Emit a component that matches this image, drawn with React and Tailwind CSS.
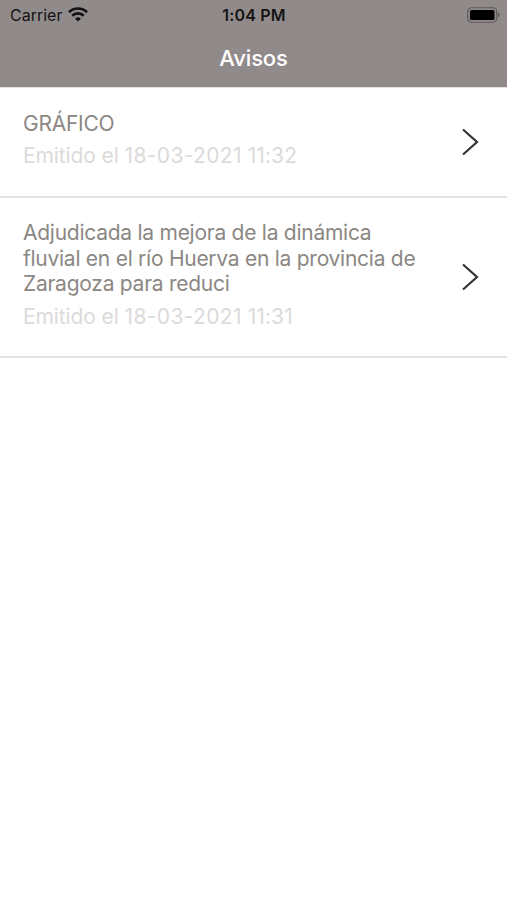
const notices = [
  {
    id: 1,
    lines: ["GRÁFICO"],
    date: "18-03-2021",
    time: "11:32",
  },
  {
    id: 2,
    lines: [
      "Adjudicada la mejora de la dinámica",
      "fluvial en el río Huerva en la provincia de",
      "Zaragoza para reduci",
    ],
    date: "18-03-2021",
    time: "11:31",
  },
];

function WifiIcon() {
  return (
    <svg width="20" height="15" viewBox="0 0 20 15" fill="none" stroke="#111" strokeWidth="2.7">
      <path d="M1 5.2a12.8 12.8 0 0 1 18 0" />
      <path d="M4.2 8.7a8.2 8.2 0 0 1 11.6 0" />
      <path d="M10 14.4 7.1 11.7a4.2 4.2 0 0 1 5.8 0Z" fill="#111" stroke="none" />
    </svg>
  );
}

function BatteryIcon() {
  return (
    <svg width="33" height="16" viewBox="0 0 33 16" fill="none">
      <rect x="0.75" y="0.75" width="29" height="14.5" rx="4" stroke="#5e5858" strokeWidth="1.2" />
      <rect x="3" y="3" width="24.5" height="10" rx="1.5" fill="#000" />
      <path d="M31 5.5c2 1 2 4 0 5Z" fill="#5e5858" />
    </svg>
  );
}

function NoticeRow({ notice }) {
  return (
    <li className="flex items-center justify-between border-b-2 border-[#e3e3e3] pr-7 pl-[23px]">
      <div className="pt-[22.5px] pb-[26.5px]">
        <h2 className="text-[21px] leading-[25.5px] tracking-[-0.26px] text-[#8b8784]">
          {notice.lines.map((line) => (
            <span key={line} className="block whitespace-nowrap">
              {line}
            </span>
          ))}
        </h2>
        <p className="mt-[7px] text-[21px] leading-[26px] tracking-[-0.1px] whitespace-nowrap text-[#dcdada]">
          Emitido el <span className="tracking-[0.35px]">{notice.date}</span>{" "}
          <span className="tracking-[0.1px]">{notice.time}</span>
        </p>
      </div>
      <svg width="18" height="28" viewBox="0 0 18 28" fill="none" stroke="#333" strokeWidth="2.2">
        <path d="M2 1.5 16 14 2 26.5" />
      </svg>
    </li>
  );
}

export default function App() {
  return (
    <div className="min-h-[900px] bg-white font-['Inter',sans-serif]">
      <header className="h-[88px] border-b border-[#e6e4e3] bg-[#918a8a]">
        <div className="grid h-[29px] grid-cols-3 items-center pr-[7px] pl-[10px] text-[#151313]">
          <div className="flex items-center gap-[6px] text-[16px]">
            Carrier
            <WifiIcon />
          </div>
          <span className="pr-[2px] text-center text-[16px] font-semibold tracking-[0.2px]">
            1:04 PM
          </span>
          <div className="flex justify-end">
            <BatteryIcon />
          </div>
        </div>
        <h1 className="pt-[14.5px] text-center text-[22px] leading-7 font-medium tracking-[-0.15px] text-white">
          Avisos
        </h1>
      </header>
      <ul>
        {notices.map((notice) => (
          <NoticeRow key={notice.id} notice={notice} />
        ))}
      </ul>
    </div>
  );
}
